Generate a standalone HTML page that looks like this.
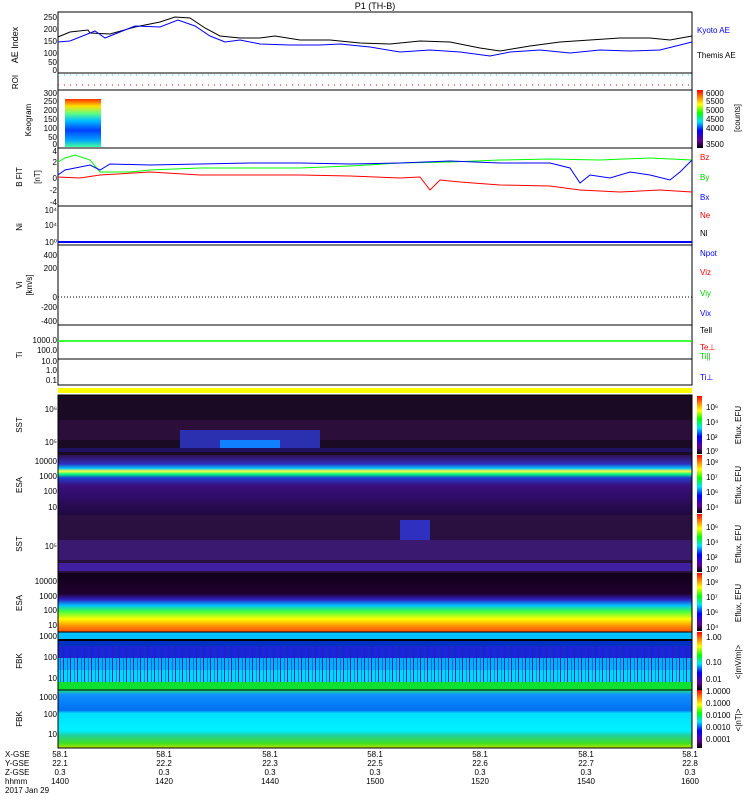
<!DOCTYPE html>
<html><head><style>
body{margin:0;background:#fff;}
svg{display:block;font-family:"Liberation Sans",sans-serif;}
.t{font-size:9px;fill:#000}
.r{font-size:8px}
</style></head><body>
<svg width="750" height="800" viewBox="0 0 750 800" xmlns="http://www.w3.org/2000/svg">
<defs>
<linearGradient id="cb" x1="0" y1="1" x2="0" y2="0">
<stop offset="0" stop-color="#000"/><stop offset="0.12" stop-color="#60008f"/><stop offset="0.3" stop-color="#0000ff"/><stop offset="0.45" stop-color="#00e0ff"/><stop offset="0.6" stop-color="#00ff00"/><stop offset="0.75" stop-color="#ffff00"/><stop offset="0.88" stop-color="#ff8000"/><stop offset="1" stop-color="#ff0000"/>
</linearGradient>
<linearGradient id="kg" x1="0" y1="0" x2="0" y2="1">
<stop offset="0" stop-color="#ff3000"/><stop offset="0.15" stop-color="#ffe000"/><stop offset="0.3" stop-color="#60ff80"/><stop offset="0.45" stop-color="#00c0ff"/><stop offset="0.65" stop-color="#0040ff"/><stop offset="0.85" stop-color="#00a0ff"/><stop offset="1" stop-color="#40ffa0"/>
</linearGradient>
<linearGradient id="ee" x1="0" y1="0" x2="0" y2="1">
<stop offset="0" stop-color="#100018"/><stop offset="0.35" stop-color="#200030"/><stop offset="0.45" stop-color="#3020c0"/><stop offset="0.55" stop-color="#00c0ff"/><stop offset="0.65" stop-color="#40ff40"/><stop offset="0.78" stop-color="#ffff00"/><stop offset="0.9" stop-color="#ff9000"/><stop offset="1" stop-color="#ff5000"/>
</linearGradient>
<linearGradient id="ei" x1="0" y1="0" x2="0" y2="1">
<stop offset="0" stop-color="#301050"/><stop offset="0.15" stop-color="#3030c0"/><stop offset="0.22" stop-color="#00c0ff"/><stop offset="0.27" stop-color="#ffff40"/><stop offset="0.32" stop-color="#00ff80"/><stop offset="0.38" stop-color="#2040d0"/><stop offset="0.5" stop-color="#3a1080"/><stop offset="1" stop-color="#200840"/>
</linearGradient>
<linearGradient id="f2" x1="0" y1="0" x2="0" y2="1">
<stop offset="0" stop-color="#20e080"/><stop offset="0.08" stop-color="#1090ff"/><stop offset="0.35" stop-color="#0070f0"/><stop offset="0.4" stop-color="#00e0ff"/><stop offset="0.7" stop-color="#00f0ff"/><stop offset="0.78" stop-color="#20d0a0"/><stop offset="0.92" stop-color="#40e020"/><stop offset="1" stop-color="#c0e000"/>
</linearGradient>
<pattern id="vs" width="7" height="10" patternUnits="userSpaceOnUse"><rect width="1" height="10" fill="#1030a0"/><rect x="4" width="1" height="10" fill="#0040c0" opacity=".6"/></pattern>
</defs>

<text x="375" y="9" class="t" text-anchor="middle">P1 (TH-B)</text>

<!-- AE -->
<rect x="58" y="12" width="634" height="61" fill="none" stroke="#000"/>
<polyline fill="none" stroke="#000" points="58,37 70,32 88,30 90,33 110,34 135,27 160,22 175,17 190,18 205,28 220,36 240,38 260,38 275,36 300,40 330,40 360,43 390,44 420,41 450,42 480,48 500,51 530,46 560,42 590,40 620,38 650,38 670,40 692,36"/>
<polyline fill="none" stroke="#00f" points="58,42 70,41 85,35 95,31 105,38 115,34 135,26 160,27 178,20 195,26 210,36 225,42 240,40 260,44 290,45 320,45 340,44 370,47 400,52 430,50 460,52 490,56 510,52 540,50 570,53 600,50 630,51 660,50 680,45 692,42"/>
<g class="t r" text-anchor="end"><text x="57" y="20">250</text><text x="57" y="32">200</text><text x="57" y="44">150</text><text x="57" y="56">100</text><text x="57" y="65">50</text><text x="57" y="73">0</text></g>
<text class="t" transform="translate(18,45) rotate(-90)" text-anchor="middle">AE Index</text>
<text x="697" y="33" class="t r" fill="#00f" style="fill:#00f">Kyoto AE</text>
<text x="697" y="58" class="t r">Themis AE</text>

<!-- ROI -->
<rect x="58" y="73" width="634" height="17" fill="none" stroke="#000"/>
<line x1="58" y1="75" x2="692" y2="75" stroke="#0ff" stroke-dasharray="1,5"/>
<line x1="58" y1="85" x2="692" y2="85" stroke="#f00" stroke-dasharray="1,5"/>
<text class="t r" transform="translate(18,82) rotate(-90)" text-anchor="middle">ROI</text>

<!-- Keogram -->
<rect x="58" y="90" width="634" height="58" fill="#fff" stroke="#000"/>
<rect x="65" y="99" width="36" height="48" fill="url(#kg)"/>
<g class="t r" text-anchor="end"><text x="57" y="96">300</text><text x="57" y="104">250</text><text x="57" y="113">200</text><text x="57" y="122">150</text><text x="57" y="131">100</text><text x="57" y="140">50</text><text x="57" y="147">0</text></g>
<text class="t r" transform="translate(31,120) rotate(-90)" text-anchor="middle">Keogram</text>
<rect x="697" y="90" width="6" height="58" fill="url(#cb)"/>
<g class="t r"><text x="706" y="96">6000</text><text x="706" y="104">5500</text><text x="706" y="113">5000</text><text x="706" y="122">4500</text><text x="706" y="131">4000</text><text x="706" y="147">3500</text></g>
<text class="t r" transform="translate(740,118) rotate(-90)" text-anchor="middle">[counts]</text>

<!-- B -->
<rect x="58" y="148" width="634" height="58" fill="none" stroke="#000"/>
<polyline fill="none" stroke="#0f0" points="58,162 65,158 75,155 90,160 100,172 110,172 130,172 150,170 200,168 250,168 300,168 350,166 400,163 450,162 500,160 550,159 600,160 650,158 692,160"/>
<polyline fill="none" stroke="#00f" points="58,175 65,170 90,165 100,170 110,164 150,165 200,164 250,163 300,163 350,164 400,163 450,161 500,163 550,163 570,168 580,183 590,175 610,178 630,172 650,175 670,180 680,172 692,160"/>
<polyline fill="none" stroke="#f00" points="58,177 80,178 100,175 150,172 200,175 250,175 300,175 350,176 400,178 420,177 430,190 440,180 460,182 500,185 550,186 580,190 620,192 660,190 692,192"/>
<g class="t r" text-anchor="end"><text x="57" y="154">4</text><text x="57" y="165">2</text><text x="57" y="181">0</text><text x="57" y="193">-2</text><text x="57" y="205">-4</text></g>
<text class="t r" transform="translate(22,177) rotate(-90)" text-anchor="middle">B FIT</text>
<text class="t r" transform="translate(40,177) rotate(-90)" text-anchor="middle">[nT]</text>
<g class="t r"><text x="700" y="160" style="fill:#f00">Bz</text><text x="700" y="180" style="fill:#0c0">By</text><text x="700" y="200" style="fill:#00f">Bx</text></g>

<!-- Ni -->
<rect x="58" y="206" width="634" height="39" fill="none" stroke="#000"/>
<line x1="58" y1="242" x2="692" y2="242" stroke="#00f" stroke-width="2"/>
<g class="t r" text-anchor="end"><text x="57" y="213">10⁴</text><text x="57" y="228">10⁴</text><text x="57" y="245">10⁰</text></g>
<text class="t r" transform="translate(22,227) rotate(-90)" text-anchor="middle">Ni</text>
<g class="t r"><text x="700" y="218" style="fill:#f00">Ne</text><text x="700" y="236">Nl</text><text x="700" y="256" style="fill:#00f">Npot</text></g>

<!-- Vi -->
<rect x="58" y="245" width="634" height="80" fill="none" stroke="#000"/>
<line x1="58" y1="297" x2="692" y2="297" stroke="#000" stroke-dasharray="1,2"/>
<g class="t r" text-anchor="end"><text x="57" y="258">400</text><text x="57" y="271">200</text><text x="57" y="300">0</text><text x="57" y="310">-200</text><text x="57" y="324">-400</text></g>
<text class="t r" transform="translate(22,285) rotate(-90)" text-anchor="middle">Vi</text>
<text class="t r" transform="translate(32,285) rotate(-90)" text-anchor="middle">[km/s]</text>
<g class="t r"><text x="700" y="275" style="fill:#f00">Viz</text><text x="700" y="296" style="fill:#0c0">Viy</text><text x="700" y="316" style="fill:#00f">Vix</text></g>

<!-- Ti -->
<rect x="58" y="325" width="634" height="60" fill="none" stroke="#000"/>
<line x1="58" y1="341" x2="692" y2="341" stroke="#0f0" stroke-width="1.5"/>
<line x1="58" y1="359" x2="692" y2="359" stroke="#000"/>
<g class="t r" text-anchor="end"><text x="57" y="343">1000.0</text><text x="57" y="353">100.0</text><text x="57" y="364">10.0</text><text x="57" y="373">1.0</text><text x="57" y="383">0.1</text></g>
<text class="t r" transform="translate(22,355) rotate(-90)" text-anchor="middle">Ti</text>
<g class="t r"><text x="700" y="333">Tell</text><text x="700" y="350" style="fill:#f00">Te⊥</text><text x="700" y="359" style="fill:#0c0">Ti||</text><text x="700" y="380" style="fill:#00f">Ti⊥</text></g>

<rect x="58" y="388" width="634" height="5" fill="#ff0"/>

<!-- SST ions -->
<rect x="58" y="395" width="634" height="60" fill="#1a0a24"/>
<rect x="58" y="420" width="634" height="20" fill="#301040" opacity=".8"/>
<rect x="180" y="430" width="140" height="18" fill="#2a30b0"/>
<rect x="220" y="440" width="60" height="10" fill="#1080ff"/>
<rect x="58" y="448" width="634" height="4" fill="#201060"/>
<g class="t r" text-anchor="end"><text x="57" y="412">10⁶</text><text x="57" y="445">10⁵</text></g>
<text class="t r" transform="translate(22,425) rotate(-90)" text-anchor="middle">SST</text>

<!-- ESA ions -->
<rect x="58" y="455" width="634" height="60" fill="url(#ei)"/>
<g class="t r" text-anchor="end"><text x="57" y="464">10000</text><text x="57" y="479">1000</text><text x="57" y="494">100</text><text x="57" y="510">10</text></g>
<text class="t r" transform="translate(22,485) rotate(-90)" text-anchor="middle">ESA</text>

<!-- SST elec -->
<rect x="58" y="515" width="634" height="58" fill="#2a1040"/>
<rect x="58" y="540" width="634" height="20" fill="#3a1a70"/>
<rect x="400" y="520" width="30" height="20" fill="#3030c0"/>
<rect x="58" y="563" width="634" height="8" fill="#4020a0"/>
<g class="t r" text-anchor="end"><text x="57" y="549">10⁵</text></g>
<text class="t r" transform="translate(22,544) rotate(-90)" text-anchor="middle">SST</text>

<!-- ESA elec -->
<rect x="58" y="573" width="634" height="59" fill="url(#ee)"/>
<g class="t r" text-anchor="end"><text x="57" y="584">10000</text><text x="57" y="599">1000</text><text x="57" y="613">100</text><text x="57" y="628">10</text></g>
<text class="t r" transform="translate(22,603) rotate(-90)" text-anchor="middle">ESA</text>

<!-- colorbars spectra -->
<rect x="697" y="396" width="5" height="58" fill="url(#cb)"/>
<rect x="697" y="455" width="5" height="58" fill="url(#cb)"/>
<rect x="697" y="514" width="5" height="58" fill="url(#cb)"/>
<rect x="697" y="573" width="5" height="58" fill="url(#cb)"/>
<rect x="697" y="632" width="5" height="58" fill="url(#cb)"/>
<rect x="697" y="690" width="5" height="58" fill="url(#cb)"/>
<g class="t r"><text x="706" y="410">10⁶</text><text x="706" y="425">10⁴</text><text x="706" y="440">10²</text><text x="706" y="454">10⁰</text>
<text x="706" y="465">10⁸</text><text x="706" y="480">10⁷</text><text x="706" y="495">10⁶</text><text x="706" y="510">10⁴</text>
<text x="706" y="530">10⁶</text><text x="706" y="545">10⁴</text><text x="706" y="560">10²</text><text x="706" y="572">10⁰</text>
<text x="706" y="585">10⁸</text><text x="706" y="600">10⁷</text><text x="706" y="615">10⁶</text><text x="706" y="630">10⁴</text>
<text x="706" y="640">1.00</text><text x="706" y="665">0.10</text><text x="706" y="682">0.01</text>
<text x="706" y="694">1.0000</text><text x="706" y="706">0.1000</text><text x="706" y="718">0.0100</text><text x="706" y="730">0.0010</text><text x="706" y="742">0.0001</text></g>
<g class="t r"><text transform="translate(741,425) rotate(-90)" text-anchor="middle">Eflux, EFU</text><text transform="translate(741,485) rotate(-90)" text-anchor="middle">Eflux, EFU</text><text transform="translate(741,544) rotate(-90)" text-anchor="middle">Eflux, EFU</text><text transform="translate(741,603) rotate(-90)" text-anchor="middle">Eflux, EFU</text><text transform="translate(741,662) rotate(-90)" text-anchor="middle">&lt;|mV/m|&gt;</text><text transform="translate(741,720) rotate(-90)" text-anchor="middle">&lt;|nT|&gt;</text></g>

<!-- FBK1 -->
<rect x="58" y="632" width="634" height="58" fill="#0030c0"/>
<rect x="58" y="632" width="634" height="7" fill="#00c0ff"/>
<rect x="58" y="639" width="634" height="2" fill="#000"/>
<rect x="58" y="646" width="634" height="12" fill="#2020e0"/>
<rect x="58" y="658" width="634" height="12" fill="#00b0ff"/>
<rect x="58" y="670" width="634" height="12" fill="#00d8ff"/>
<rect x="58" y="646" width="634" height="36" fill="url(#vs)"/>
<rect x="58" y="682" width="634" height="8" fill="#10e030"/>
<g class="t r" text-anchor="end"><text x="57" y="639">1000</text><text x="57" y="660">100</text><text x="57" y="681">10</text></g>
<text class="t r" transform="translate(22,661) rotate(-90)" text-anchor="middle">FBK</text>

<!-- FBK2 -->
<rect x="58" y="690" width="634" height="58" fill="url(#f2)"/>
<line x1="58" y1="690" x2="692" y2="690" stroke="#000"/>
<g class="t r" text-anchor="end"><text x="57" y="700">1000</text><text x="57" y="717">100</text><text x="57" y="737">10</text></g>
<text class="t r" transform="translate(22,719) rotate(-90)" text-anchor="middle">FBK</text>
<rect x="58" y="632" width="634" height="116" fill="none" stroke="#000"/>
<rect x="58" y="395" width="634" height="237" fill="none" stroke="#000"/>

<!-- bottom labels -->
<g class="t r">
<text x="5" y="757">X-GSE</text><text x="5" y="766">Y-GSE</text><text x="5" y="775">Z-GSE</text><text x="5" y="784">hhmm</text><text x="5" y="793">2017 Jan 29</text>
</g>
<g class="t r" text-anchor="middle">
<text x="60" y="757">58.1</text><text x="60" y="766">22.1</text><text x="60" y="775">0.3</text><text x="60" y="784">1400</text>
<text x="164" y="757">58.1</text><text x="164" y="766">22.2</text><text x="164" y="775">0.3</text><text x="164" y="784">1420</text>
<text x="270" y="757">58.1</text><text x="270" y="766">22.3</text><text x="270" y="775">0.3</text><text x="270" y="784">1440</text>
<text x="375" y="757">58.1</text><text x="375" y="766">22.5</text><text x="375" y="775">0.3</text><text x="375" y="784">1500</text>
<text x="480" y="757">58.1</text><text x="480" y="766">22.6</text><text x="480" y="775">0.3</text><text x="480" y="784">1520</text>
<text x="586" y="757">58.1</text><text x="586" y="766">22.7</text><text x="586" y="775">0.3</text><text x="586" y="784">1540</text>
<text x="690" y="757">58.1</text><text x="690" y="766">22.8</text><text x="690" y="775">0.3</text><text x="690" y="784">1600</text>
</g>
</svg>
</body></html>
